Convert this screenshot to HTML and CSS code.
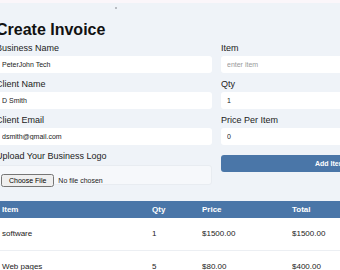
FILE: index.html
```html
<!DOCTYPE html>
<html>
  <head>
    <meta charset="UTF-8">
    <title>Create Invoice</title>
    <link rel="stylesheet" href="styles.css">
  </head>
  <body>
    <div class="topbar"></div>
    <div class="dotline"><span class="dot"></span></div>

    <div class="page">
      <h1 class="title">Create Invoice</h1>

      <div class="form">
        <div class="col">
          <div class="field">
            <label>Business Name</label>
            <input type="text" value="PeterJohn Tech">
          </div>
          <div class="field">
            <label>Client Name</label>
            <input type="text" value="D Smith">
          </div>
          <div class="field">
            <label>Client Email</label>
            <input type="text" value="dsmith@gmail.com">
          </div>
          <div class="field">
            <label>Upload Your Business Logo</label>
            <div class="filebox">
              <input type="file" class="file">
            </div>
          </div>
        </div>

        <div class="col">
          <div class="field">
            <label>Item</label>
            <input type="text" placeholder="enter item">
          </div>
          <div class="field">
            <label>Qty</label>
            <input type="text" value="1">
          </div>
          <div class="field">
            <label>Price Per Item</label>
            <input type="text" value="0">
          </div>
          <button class="add">Add Item</button>
        </div>
      </div>

      <table class="items">
        <thead>
          <tr>
            <th class="c-item">Item</th>
            <th class="c-qty">Qty</th>
            <th class="c-price">Price</th>
            <th class="c-total">Total</th>
          </tr>
        </thead>
        <tbody>
          <tr>
            <td>software</td>
            <td>1</td>
            <td>$1500.00</td>
            <td>$1500.00</td>
          </tr>
          <tr>
            <td>Web pages</td>
            <td>5</td>
            <td>$80.00</td>
            <td>$400.00</td>
          </tr>
        </tbody>
      </table>
    </div>
  </body>
</html>
```

FILE: styles.css
```css
* {
  margin: 0;
  padding: 0;
  box-sizing: border-box;
}

html, body {
  overflow: hidden;
}

body {
  background-color: #eff3f8;
  font-family: "Liberation Sans", Arial, sans-serif;
  color: #222;
}

.topbar {
  height: 3px;
  background-color: #fbf6fa;
}

.dotline {
  height: 11px;
  padding-left: 115px;
  padding-top: 4px;
}

.dot {
  display: block;
  width: 2px;
  height: 2px;
  background-color: #b8bcc2;
}

.page {
  width: 450px;
  margin-left: -4px;
}

.title {
  font-size: 16px;
  font-weight: bold;
  color: #111;
  line-height: 20px;
  margin-top: 6px;
  margin-bottom: 2px;
}

.form {
  display: grid;
  grid-template-columns: 216px 218px;
  column-gap: 9px;
}

.field {
  margin-bottom: 5px;
}

.field label {
  display: block;
  font-size: 9px;
  line-height: 12px;
  color: #222;
  margin-bottom: 2px;
}

.field input[type="text"] {
  display: block;
  width: 100%;
  height: 17px;
  border: none;
  border-radius: 3px;
  background-color: #fff;
  padding: 0 6px;
  font-family: "Liberation Sans", Arial, sans-serif;
  font-size: 7px;
  color: #222;
  outline: none;
}

.field input::placeholder {
  color: #9a9a9a;
}

.filebox {
  margin-top: 3px;
  height: 20px;
  background-color: #f6f8fb;
  border: 1px solid #e8ecf1;
  border-radius: 3px;
  padding: 3px 4px;
}

.file {
  font-family: "Liberation Sans", Arial, sans-serif;
  font-size: 7px;
  color: #222;
}

.add {
  display: block;
  width: 100%;
  height: 17px;
  margin-top: 10px;
  border: none;
  border-radius: 3px;
  background-color: #4a76a8;
  color: #fff;
  font-family: "Liberation Sans", Arial, sans-serif;
  font-size: 7px;
  font-weight: bold;
}

.items {
  margin-top: 11px;
  width: 100%;
  border-collapse: collapse;
  font-size: 8px;
}

.items th {
  background-color: #4a76a8;
  color: #fff;
  font-weight: bold;
  text-align: left;
  height: 17px;
  padding: 0 6px;
}

.items td {
  height: 32px;
  padding: 0 6px;
  background-color: #fff;
  color: #222;
  border-bottom: 1px solid #eceff3;
}

.c-item {
  width: 150px;
}

.c-qty {
  width: 50px;
}

.c-price {
  width: 90px;
}
```
